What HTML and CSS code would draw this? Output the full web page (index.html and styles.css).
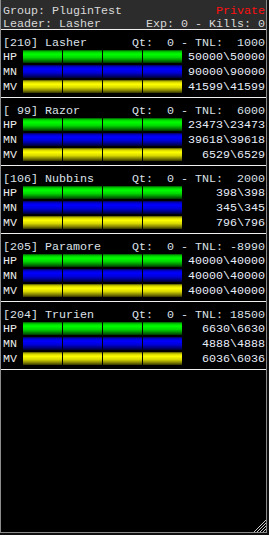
FILE: index.html
```html
<!DOCTYPE html>
<html lang="en">
<head>
    <meta charset="UTF-8">
    <meta name="viewport" content="width=device-width, initial-scale=1.0">
    <title>Group Monitor</title>
    <link rel="stylesheet" href="styles.css">
</head>
<body>
    <div class="window">
        <header class="group-head">
            <div class="head-line"><span>Group: PluginTest</span><span class="private">Private</span></div>
            <div class="head-line"><span>Leader: Lasher</span><span>Exp: 0 - Kills: 0</span></div>
        </header>

        <div class="member">
            <div class="member-name"><span>[210] Lasher</span><span>Qt:  0 - TNL:  1000</span></div>
            <div class="stat"><span class="stat-label">HP</span><div class="bar hp"></div><span class="stat-value">50000\50000</span></div>
            <div class="stat"><span class="stat-label">MN</span><div class="bar mn"></div><span class="stat-value">90000\90000</span></div>
            <div class="stat"><span class="stat-label">MV</span><div class="bar mv"></div><span class="stat-value">41599\41599</span></div>
        </div>

        <div class="member">
            <div class="member-name"><span>[ 99] Razor</span><span>Qt:  0 - TNL:  6000</span></div>
            <div class="stat"><span class="stat-label">HP</span><div class="bar hp"></div><span class="stat-value">23473\23473</span></div>
            <div class="stat"><span class="stat-label">MN</span><div class="bar mn"></div><span class="stat-value">39618\39618</span></div>
            <div class="stat"><span class="stat-label">MV</span><div class="bar mv"></div><span class="stat-value">6529\6529</span></div>
        </div>

        <div class="member">
            <div class="member-name"><span>[106] Nubbins</span><span>Qt:  0 - TNL:  2000</span></div>
            <div class="stat"><span class="stat-label">HP</span><div class="bar hp"></div><span class="stat-value">398\398</span></div>
            <div class="stat"><span class="stat-label">MN</span><div class="bar mn"></div><span class="stat-value">345\345</span></div>
            <div class="stat"><span class="stat-label">MV</span><div class="bar mv"></div><span class="stat-value">796\796</span></div>
        </div>

        <div class="member">
            <div class="member-name"><span>[205] Paramore</span><span>Qt:  0 - TNL: -8990</span></div>
            <div class="stat"><span class="stat-label">HP</span><div class="bar hp"></div><span class="stat-value">40000\40000</span></div>
            <div class="stat"><span class="stat-label">MN</span><div class="bar mn"></div><span class="stat-value">40000\40000</span></div>
            <div class="stat"><span class="stat-label">MV</span><div class="bar mv"></div><span class="stat-value">40000\40000</span></div>
        </div>

        <div class="member">
            <div class="member-name"><span>[204] Trurien</span><span>Qt:  0 - TNL: 18500</span></div>
            <div class="stat"><span class="stat-label">HP</span><div class="bar hp"></div><span class="stat-value">6630\6630</span></div>
            <div class="stat"><span class="stat-label">MN</span><div class="bar mn"></div><span class="stat-value">4888\4888</span></div>
            <div class="stat"><span class="stat-label">MV</span><div class="bar mv"></div><span class="stat-value">6036\6036</span></div>
        </div>

        <!-- resize grip -->
        <svg class="grip" width="12" height="12" viewBox="0 0 12 12">
            <path d="M3 12L12 3M6 12L12 6M9 12L12 9M0 12L12 0" stroke="#c8c8c8" stroke-width="1" fill="none"/>
        </svg>
    </div>
</body>
</html>
```

FILE: styles.css
```css
body {
    margin: 0;
    padding: 0;
    background-color: #101010;
    font-family: "Liberation Mono", "Courier New", monospace;
    font-size: 11.67px;
    color: #dce0e8;
}
.window {
    position: relative;
    box-sizing: border-box;
    width: 267px;
    height: 533px;
    background-color: #000;
    border: 1px solid #8c8c8c;
    border-top: none;
    overflow: hidden;
}
.group-head {
    height: 30px;
    box-sizing: border-box;
    padding: 5px 1px 0 2px;
    background-color: #2c2c2c;
    border-bottom: 1px solid #f0f0f0;
    color: #d8d8d8;
}
.head-line {
    display: flex;
    justify-content: space-between;
    line-height: 13px;
    white-space: pre;
}
.private {
    color: #ff1010;
}
.member {
    height: 68px;
    box-sizing: border-box;
    padding: 7px 1px 0 2px;
    border-bottom: 1px solid #f0f0f0;
}
.member-name {
    display: flex;
    justify-content: space-between;
    line-height: 13px;
    margin-bottom: -1px;
    white-space: pre;
}
.stat {
    display: flex;
    align-items: center;
    height: 15px;
}
.stat-label {
    width: 19px;
    color: #ececec;
}
.stat-value {
    flex: 1;
    text-align: right;
    color: #e8eefa;
}
.bar {
    width: 161px;
    height: 13px;
}
.bar.hp {
    background: repeating-linear-gradient(to right, #000 0 1px, transparent 1px 40px),
        linear-gradient(to bottom, #005000 0%, #00d000 14%, #00ff00 32%, #00d800 58%, #007800 84%, #003000 100%);
}
.bar.mn {
    background: repeating-linear-gradient(to right, #000 0 1px, transparent 1px 40px),
        linear-gradient(to bottom, #000050 0%, #0000d0 14%, #0000ff 32%, #0000d8 58%, #000078 84%, #000030 100%);
}
.bar.mv {
    background: repeating-linear-gradient(to right, #000 0 1px, transparent 1px 40px),
        linear-gradient(to bottom, #505000 0%, #d0d000 14%, #ffff00 32%, #d8d800 58%, #787800 84%, #303000 100%);
}
.grip {
    position: absolute;
    right: 0;
    bottom: 0;
}
```
